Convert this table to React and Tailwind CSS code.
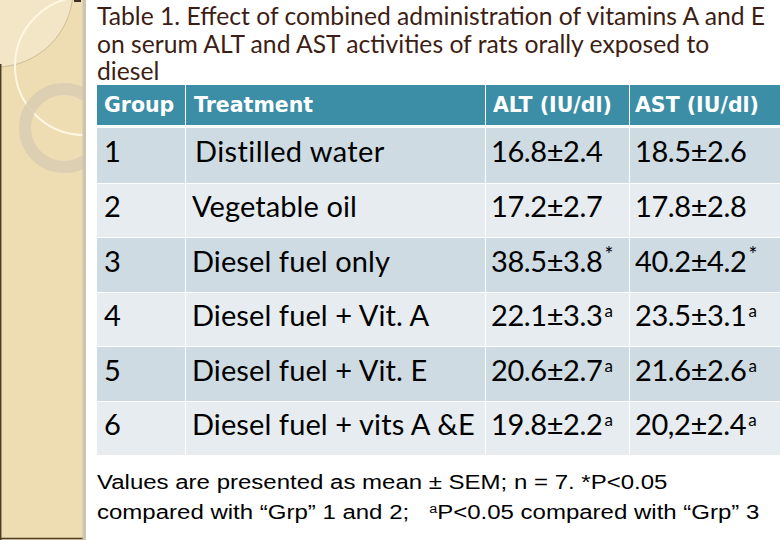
import React from 'react';

const rows = [
  { g: '1', t: 'Distilled water', alt: '16.8±2.4', ast: '18.5±2.6', dark: true, gill: true },
  { g: '2', t: 'Vegetable oil', alt: '17.2±2.7', ast: '17.8±2.8' },
  { g: '3', t: 'Diesel fuel only', alt: '38.5±3.8', ast: '40.2±4.2', mark: '*', dark: true },
  { g: '4', t: 'Diesel fuel + Vit. A', alt: '22.1±3.3', ast: '23.5±3.1', mark: 'a' },
  { g: '5', t: 'Diesel fuel + Vit. E', alt: '20.6±2.7', ast: '21.6±2.6', mark: 'a', dark: true },
  { g: '6', t: 'Diesel fuel + vits A &E', alt: '19.8±2.2', ast: '20,2±2.4', mark: 'a' },
];

const gill = { fontFamily: 'Lato, sans-serif' };

const Mark = ({ m }) => {
  if (!m) return null;
  if (m === '*') return <span className="text-[21px] align-[10px] ml-[2px]">*</span>;
  return <span className="text-[17px] align-[9px] ml-[2px]">a</span>;
};

function Sidebar() {
  return (
    <div className="w-[86px] h-[540px] shrink-0">
      <svg width="86" height="540" viewBox="0 0 86 540">
        <rect x="0" y="0" width="86" height="540" fill="#eedcb3" />
        <circle cx="-4" cy="-10" r="77" fill="#f3e6c7" stroke="#c7b38c" strokeWidth="0.8" />
        <circle cx="84" cy="66" r="69" fill="none" stroke="#fff7e2" strokeWidth="2" />
        <circle cx="64" cy="128" r="39" fill="none" stroke="#d9cdb0" strokeWidth="12" opacity="0.85" />
        <line x1="0.7" y1="64" x2="0.7" y2="540" stroke="#4d3d25" strokeWidth="1.5" />
        <line x1="0" y1="538.5" x2="86" y2="538.5" stroke="#4d3d25" strokeWidth="1.5" />
        <rect x="82.5" y="0" width="3.5" height="540" fill="#cdc5b0" />
        <rect x="74" y="0" width="7" height="2" fill="#3d2f1f" />
      </svg>
    </div>
  );
}

export default function App() {
  return (
    <div className="w-[780px] h-[540px] flex bg-white overflow-hidden">
      <Sidebar />
      <div className="flex-1 pl-[11px]">
        <h1
          className="text-[24.7px] leading-[27.5px] text-[#3d1e14] mt-[2px] h-[83px] whitespace-nowrap"
          style={gill}
        >
          Table 1. Effect of combined administration of vitamins A and E
          <br />
          on serum ALT and AST activities of rats orally exposed to
          <br />
          diesel
        </h1>
        <div className="w-[683px]">
          <div
            className="grid grid-cols-[89px_300px_144px_150px] h-[40px] bg-[#3b8ea6] text-white font-bold text-[20.5px] border-b-[3px] border-white box-content"
            style={{ fontFamily: '"DejaVu Sans", sans-serif' }}
          >
            <div className="pl-[7px] flex items-center border-r border-white">Group</div>
            <div className="pl-[8px] flex items-center border-r border-white">Treatment</div>
            <div className="pl-[7px] flex items-center border-r border-white">ALT (IU/dl)</div>
            <div className="pl-[5px] flex items-center">AST (IU/dl)</div>
          </div>
          {rows.map((r, i) => (
            <div
              key={r.g}
              className={`grid grid-cols-[89px_300px_144px_150px] h-[54.5px] text-[29px] text-black ${
                i > 0 ? 'border-t border-white' : ''
              } ${r.dark ? 'bg-[#cfdbe2]' : 'bg-[#e6ecef]'}`}
              style={gill}
            >
              <div className="pl-[7px] pb-[9px] flex items-center border-r border-white">
                <span>{r.g}</span>
              </div>
              <div className="pl-[6px] pb-[9px] flex items-center border-r border-white">
                <span className={r.gill ? 'pl-[3px] tracking-[0.4px]' : 'tracking-[0.1px]'}>{r.t}</span>
              </div>
              <div className="pl-[5px] pb-[9px] flex items-center border-r border-white">
                <span className="tracking-[-0.4px]">
                  {r.alt}
                  <Mark m={r.mark} />
                </span>
              </div>
              <div className="pl-[5px] pb-[9px] flex items-center">
                <span className="tracking-[-0.4px]">
                  {r.ast}
                  <Mark m={r.mark} />
                </span>
              </div>
            </div>
          ))}
        </div>
        <div
          className="mt-[14px] text-[20px] leading-[27px] text-black origin-left scale-x-[1.2] whitespace-nowrap"
          style={{ fontFamily: '"Liberation Sans", Arial, sans-serif' }}
        >
          <div>Values are presented as mean ± SEM; n = 7. *P&lt;0.05</div>
          <div>
            compared with “Grp” 1 and 2;&nbsp;&nbsp;&nbsp;
            <span className="text-[12px] align-[6px]">a</span>P&lt;0.05 compared with “Grp” 3
          </div>
        </div>
      </div>
    </div>
  );
}
